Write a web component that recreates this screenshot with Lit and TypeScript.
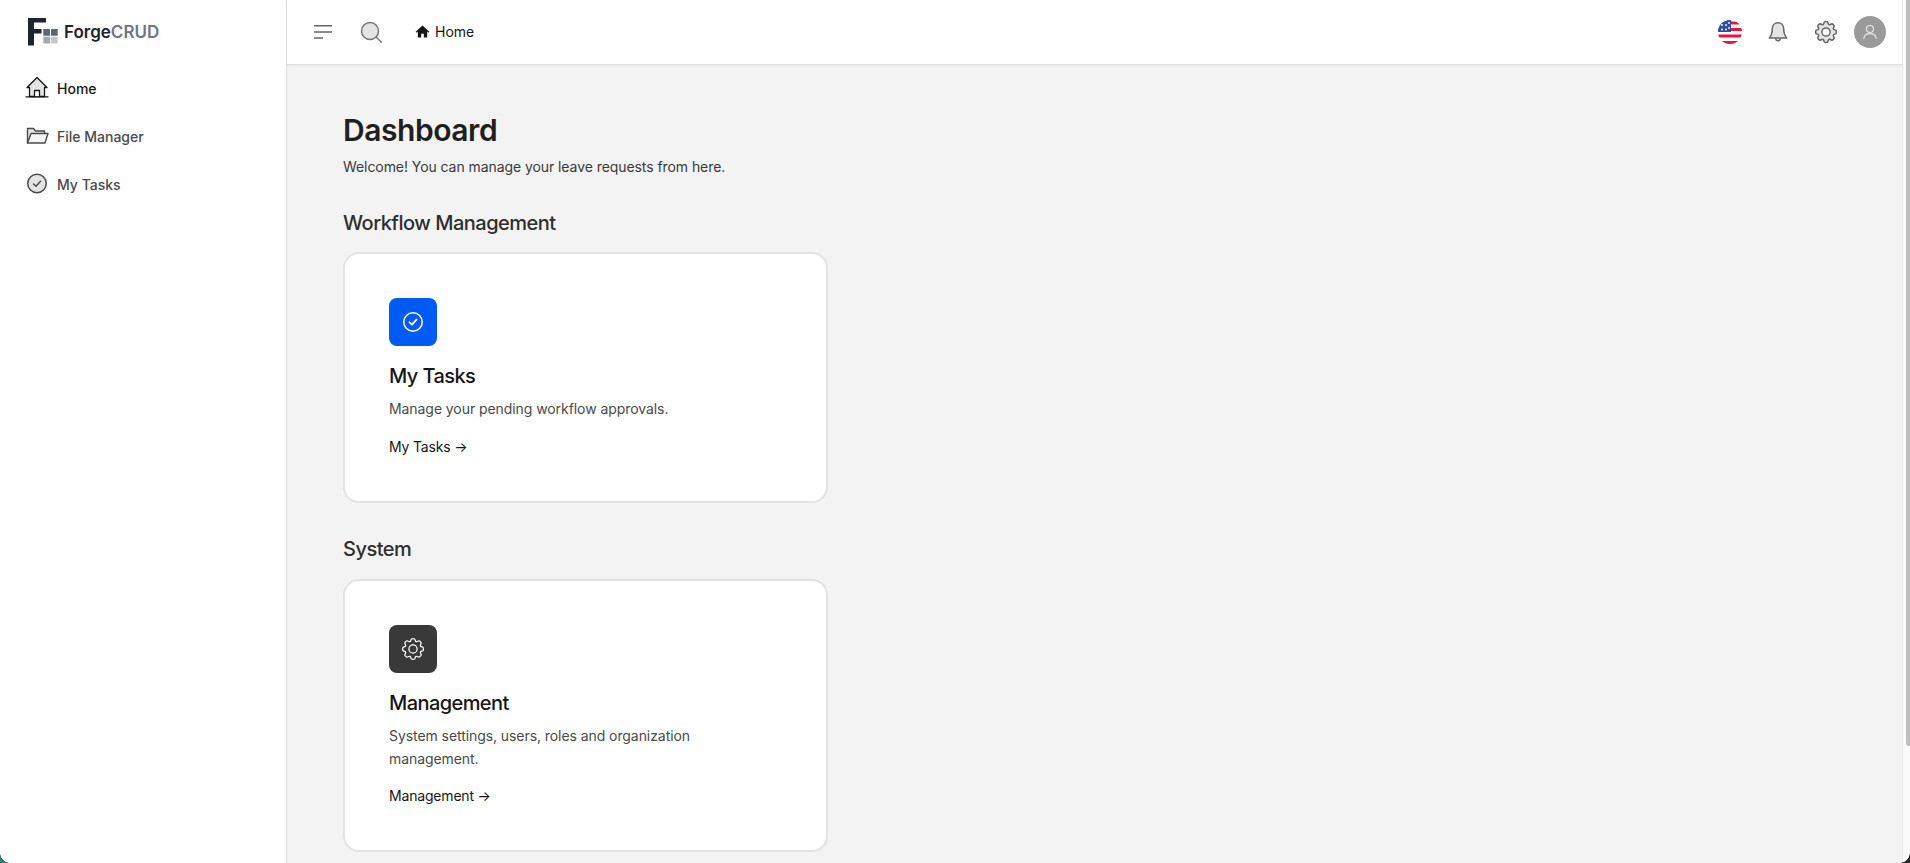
import { LitElement, html, css, svg } from "lit";
import { customElement } from "lit/decorators.js";

function gearPath(): string {
  const teeth = 8, cx = 12, cy = 12, rOut = 10.2, rIn = 8.1;
  const pts: string[] = [];
  for (let i = 0; i < teeth; i++) {
    const a = (i / teeth) * Math.PI * 2 - Math.PI / 2;
    const step = (Math.PI * 2) / teeth;
    const p = (r: number, t: number) => `${(cx + r * Math.cos(t)).toFixed(2)} ${(cy + r * Math.sin(t)).toFixed(2)}`;
    pts.push(`${i === 0 ? "M" : "L"}${p(rIn, a - step * 0.42)}`);
    pts.push(`L${p(rOut, a - step * 0.2)}`);
    pts.push(`Q${p(rOut + 0.6, a)} ${p(rOut, a + step * 0.2)}`);
    pts.push(`L${p(rIn, a + step * 0.42)}`);
  }
  return pts.join(" ") + "Z";
}

const gear = svg`<path class="gearbody" d=${gearPath()}/><circle class="gearhole" cx="12" cy="12" r="4.1"/>`;

@customElement("app-root")
export class AppRoot extends LitElement {
  static styles = css`
    :host { display: block; width: 1910px; height: 863px; overflow: hidden; position: relative; font-family: Inter, "Liberation Sans", sans-serif; background: #fff; color: #1f1f1f; }
    * { box-sizing: border-box; }
    .layout { display: flex; height: 863px; }
    .sidebar { width: 287px; flex: none; background: #fff; border-right: 1px solid #dcdcdc; padding: 16px 0 0 24px; }
    .brand { display: flex; align-items: center; height: 32px; gap: 5px; font-size: 17px; font-weight: 600; color: #1a2530; }
    .brand svg { margin-left: 3px; }
    .brand span { color: #6e7680; }
    .nav { display: flex; flex-direction: column; margin-top: 16px; }
    .nav-item { display: flex; align-items: center; height: 48px; gap: 8px; font-size: 14px; font-weight: 500; color: #4a4a4a; }
    .nav-item.active { color: #161616; }
    .nav-item svg { flex: none; width: 24px; height: 24px; margin-left: 1px; }
    .fillc { fill: #e4e4e4; }
    .main { flex: 1; min-width: 0; display: flex; flex-direction: column; background: #f3f3f3; }
    .topbar { height: 65px; flex: none; background: #fff; border-bottom: 1px solid #e0e0e0; box-shadow: 0 1px 2px rgba(0,0,0,.05); display: flex; align-items: center; padding: 0 16px 0 26px; }
    .tb-icon { display: flex; color: #666; }
    .search { margin-left: 26px; }
    .crumb { display: flex; align-items: center; gap: 5px; margin-left: 32px; padding-bottom: 1px; font-size: 14px; font-weight: 400; color: #161616; }
    .right { margin-left: auto; display: flex; align-items: center; }
    .flag { width: 24px; height: 24px; border-radius: 50%; overflow: hidden; display: block; }
    .bell { margin-left: 24px; }
    .gear { margin-left: 24px; }
    .gear .gearbody { fill: #e4e4e4; }
    .gear .gearhole { fill: #fff; }
    .avatar { width: 32px; height: 32px; margin-left: 16px; border-radius: 50%; background: #9a9a9a; display: flex; align-items: center; justify-content: center; color: #e6e6e6; }
    .content { padding: 47px 56px 0; overflow: hidden; flex: 1; }
    h1 { margin: 0; font-size: 30px; line-height: 36px; font-weight: 600; color: #1f1f1f; letter-spacing: -0.45px; }
    .sub { margin: 8px 0 0; font-size: 14px; line-height: 22px; color: #3a3a3a; letter-spacing: -0.07px; }
    h2 { margin: 31px 0 0; font-size: 20px; line-height: 28px; font-weight: 500; color: #2e2e2e; letter-spacing: -0.5px; }
    h2.sys { margin-top: 32px; }
    .card { width: 485px; margin-top: 16px; background: #fff; border: 2px solid #e2e2e2; border-radius: 16px; padding: 44px; }
    .card.first { margin-top: 15px; }
    .ic { width: 48px; height: 48px; border-radius: 8px; display: flex; align-items: center; justify-content: center; color: #fff; }
    .ic.blue { background: #005af5; }
    .ic.dark { background: #393939; }
    h3 { margin: 16px 0 0; font-size: 20px; line-height: 28px; font-weight: 500; color: #161616; letter-spacing: -0.58px; }
    .card p { margin: 8px 0 0; font-size: 14px; line-height: 22.75px; color: #4a4a4a; letter-spacing: -0.07px; }
    .link { display: block; margin-top: 16px; font-size: 14px; line-height: 20px; color: #161616; letter-spacing: -0.18px; }
    .scrollbar { width: 8px; flex: none; background: #fbfbfb; border-left: 1px solid #e8e8e8; position: relative; }
    .thumb { position: absolute; left: 3px; top: 0; width: 4px; height: 746px; background: #bdbdbd; border-radius: 0 0 0 3px; }
    .corner { position: absolute; bottom: 0; width: 10px; height: 10px; }
    .corner.l { left: 0; background: radial-gradient(circle at 100% 0, transparent 9.5px, #2f7d68 10px); }
    .corner.r { right: 0; background: radial-gradient(circle at 0 0, transparent 9.5px, #2a2a2a 10px); }
  `;

  render() {
    return html`
      <div class="layout">
        <aside class="sidebar">
          <div class="brand">
            <svg width="32" height="30" viewBox="0 0 32 30">
              <path d="M1 1h18v4.500H7V12h7.500v4.500H7V28.500H1z" fill="#1a2530"/>
              <rect x="16.300" y="12" width="6.700" height="6.700" fill="#5c6670" rx=".5"/><rect x="24" y="12" width="6.700" height="6.700" fill="#5c6670" rx=".5"/>
              <rect x="16.300" y="19.700" width="6.700" height="6.700" fill="#a3a8ad" rx=".5"/><rect x="24" y="19.700" width="6.700" height="6.700" fill="#c4c7ca" rx=".5"/>
            </svg>
            <div>Forge<span>CRUD</span></div>
          </div>
          <nav class="nav">
            <div class="nav-item active">
              <svg viewBox="0 0 24 24" fill="none" stroke="#161616" stroke-width="1.300" stroke-linejoin="round" stroke-linecap="round"><path class="fillc" d="M2 11.500 12 1.500l10 10h-2.500V20.500h-15V11.500z"/><path fill="#fff" d="M9.500 20.500v-6h5v6"/><path d="M1 20.800h22"/></svg>
              Home
            </div>
            <div class="nav-item">
              <svg viewBox="0 0 24 24" fill="none" stroke="#4a4a4a" stroke-width="1.400" stroke-linejoin="round" stroke-linecap="round"><path class="fillc" d="M2.500 19V4.500h6l2 2.500h9v2.500"/><path d="M2.500 19 6 9.500h17L20 19z" fill="#f6f6f6"/></svg>
              File Manager
            </div>
            <div class="nav-item">
              <svg viewBox="0 0 24 24" fill="none" stroke="#4a4a4a" stroke-width="1.500" stroke-linecap="round" stroke-linejoin="round"><circle cx="12" cy="11.500" r="9.250" class="fillc"/><path d="M8.500 12l2.500 2.300 4.500-5"/></svg>
              My Tasks
            </div>
          </nav>
        </aside>
        <div class="main">
          <header class="topbar">
            <span class="tb-icon"><svg width="20" height="20" viewBox="0 0 20 20" fill="none" stroke="#666" stroke-width="1.600"><path d="M1 3.700h18M1 10h18M1 16h9"/></svg></span>
            <span class="tb-icon search"><svg width="24" height="24" viewBox="0 0 24 24" fill="none" stroke="#777" stroke-width="1.500" stroke-linecap="round"><circle class="fillc" cx="11" cy="11" r="8.500"/><path d="M17.300 17.300l5 5"/></svg></span>
            <div class="crumb">
              <svg width="15" height="15" viewBox="0 0 16 16" fill="#161616"><path d="M8 1.500.7 8.300l.9.900L3 8v6.300h3.600v-4h2.800v4H13V8l1.400 1.200.9-.900z"/></svg>
              Home
            </div>
            <div class="right">
              <svg class="flag" viewBox="0 0 24 24">
                <rect width="24" height="24" fill="#fff"/>
                <g fill="#e8163c"><rect y="1.500" width="24" height="3"/><rect y="8" width="24" height="3"/><rect y="14.500" width="24" height="3"/><rect y="21" width="24" height="3"/></g>
                <rect width="13" height="12" fill="#2b50a0"/>
                <g fill="#fff"><circle cx="4" cy="5" r=".9"/><circle cx="8" cy="5" r=".9"/><circle cx="11" cy="3" r=".9"/><circle cx="4" cy="9.500" r=".9"/><circle cx="8" cy="9.500" r=".9"/><circle cx="11" cy="8" r=".9"/></g>
              </svg>
              <span class="tb-icon bell"><svg width="24" height="24" viewBox="0 0 24 24" fill="none" stroke="#666" stroke-width="1.500" stroke-linejoin="round"><path class="fillc" d="M12 2.800c-3.400 0-5.700 2.500-5.700 6 0 4.700-1 6.800-3 9.200h17.400c-2-2.400-3-4.500-3-9.200 0-3.500-2.300-6-5.700-6z"/><path d="M9.800 18.500a2.200 2.200 0 0 0 4.400 0"/></svg></span>
              <span class="tb-icon gear"><svg width="24" height="24" viewBox="0 0 24 24" fill="none" stroke="#666" stroke-width="1.500" stroke-linejoin="round">${gear}</svg></span>
              <div class="avatar"><svg width="16" height="16" viewBox="0 0 16 16" fill="none" stroke="currentColor" stroke-width="1.200" stroke-linecap="round"><circle cx="8" cy="5" r="3.500"/><path d="M1.800 14.500c.5-3 2.800-4.800 6.200-4.800s5.700 1.800 6.200 4.800"/></svg></div>
            </div>
          </header>
          <main class="content">
            <h1>Dashboard</h1>
            <p class="sub">Welcome! You can manage your leave requests from here.</p>
            <h2>Workflow Management</h2>
            <section class="card first">
              <div class="ic blue"><svg width="24" height="24" viewBox="0 0 24 24" fill="none" stroke="currentColor" stroke-width="1.500" stroke-linecap="round" stroke-linejoin="round"><circle cx="12" cy="12" r="9.250"/><path d="M8.500 12.300l2.500 2.300 4.500-5" stroke-width="1.800"/></svg></div>
              <h3>My Tasks</h3>
              <p>Manage your pending workflow approvals.</p>
              <span class="link">My Tasks →</span>
            </section>
            <h2 class="sys">System</h2>
            <section class="card">
              <div class="ic dark"><svg width="24" height="24" viewBox="0 0 24 24" fill="none" stroke="currentColor" stroke-width="1.200" stroke-linejoin="round">${gear}</svg></div>
              <h3>Management</h3>
              <p>System settings, users, roles and organization management.</p>
              <span class="link">Management →</span>
            </section>
          </main>
        </div>
        <div class="scrollbar"><div class="thumb"></div></div>
      </div>
      <div class="corner l"></div>
      <div class="corner r"></div>
    `;
  }
}
